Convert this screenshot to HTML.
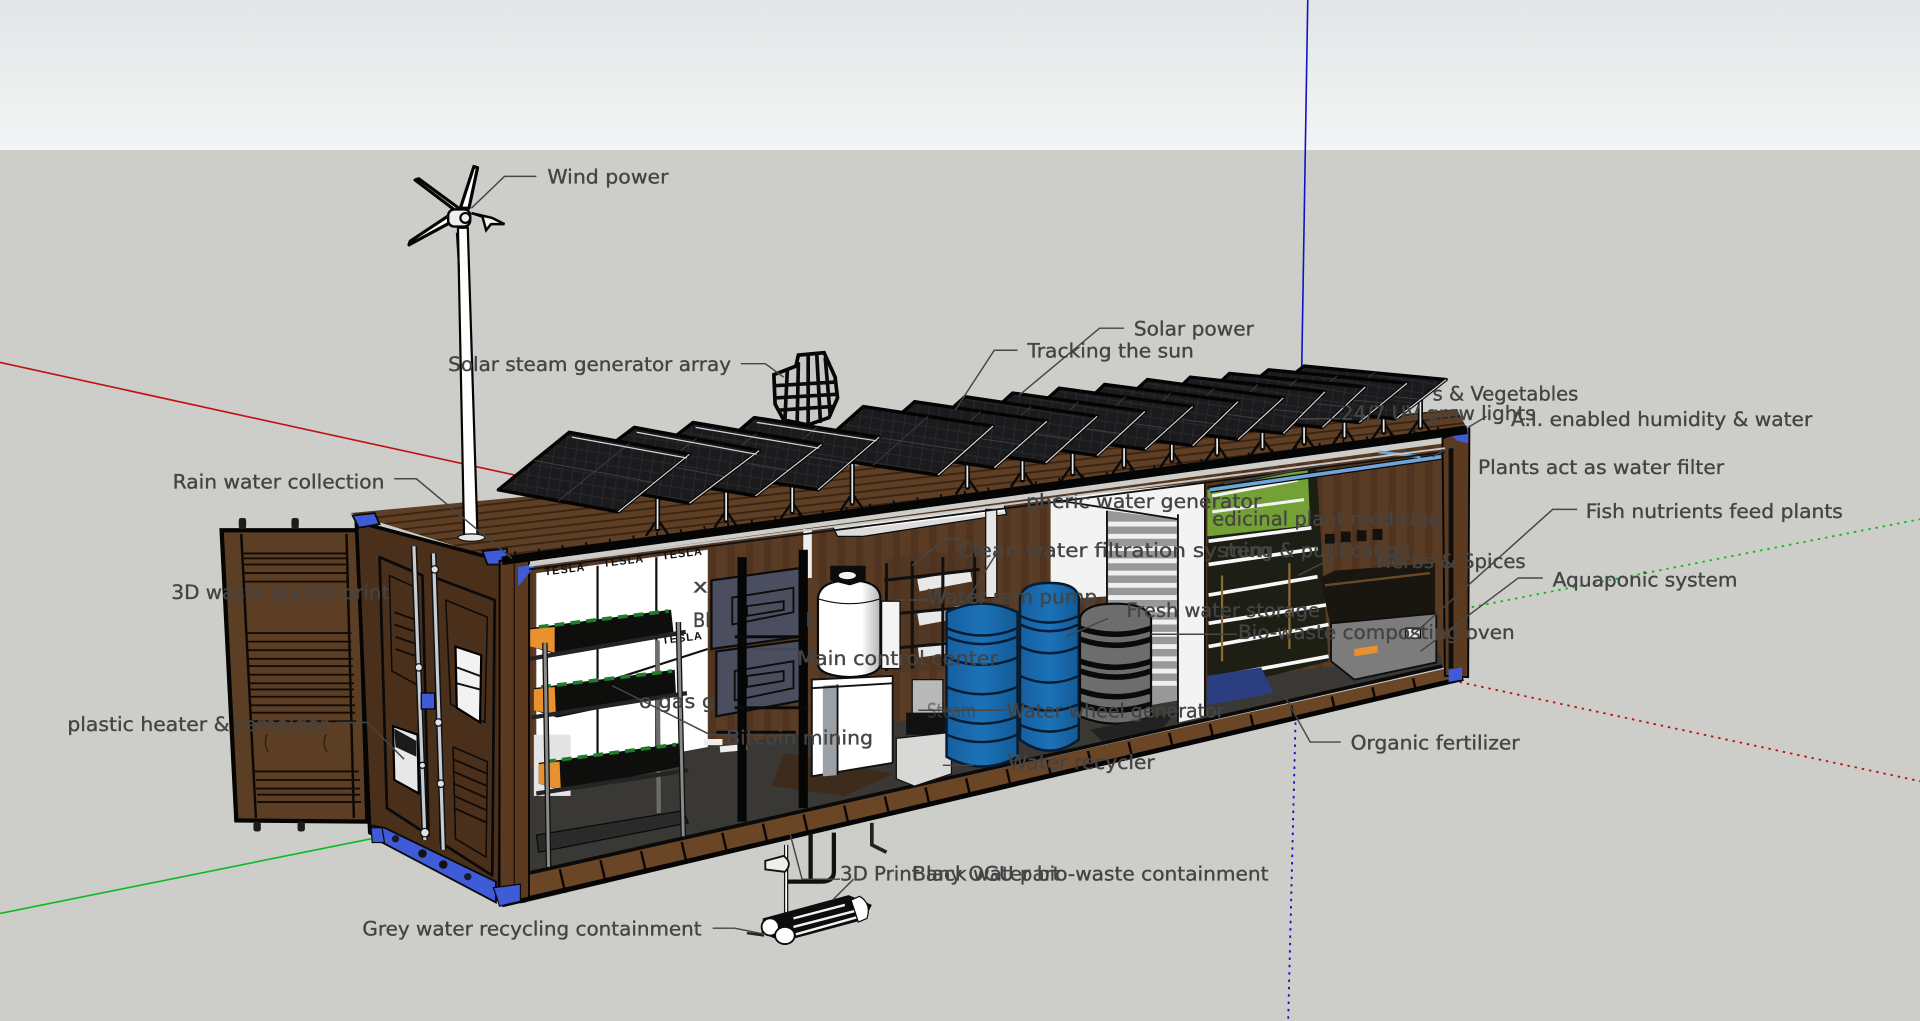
<!DOCTYPE html>
<html lang="en"><head><meta charset="utf-8"><title>Container farm model</title>
<style>
html,body{margin:0;padding:0;width:1920px;height:1021px;overflow:hidden;background:#cdcec9}
svg{display:block}
.l{font-family:"DejaVu Sans","Liberation Sans",sans-serif;font-size:16.2px;fill:#444;stroke:#444;stroke-width:.3}
.f{fill:none;stroke:#464646;stroke-width:1.2}
.p{fill:url(#cell);stroke:#040404;stroke-width:2.8;stroke-linejoin:round}
.g{fill:none;stroke:#3e3e42;stroke-width:.8}
.e{fill:none;stroke:#d4d4d4;stroke-width:1}
.k{fill:none;stroke:#0a0a0a;stroke-linecap:round;stroke-linejoin:round}
.t{font-family:"Liberation Sans",sans-serif;font-weight:700;font-size:9px;fill:#111;letter-spacing:.8px}
</style></head><body>
<svg width="1920" height="1021" viewBox="0 0 1568 833.8" xmlns="http://www.w3.org/2000/svg">
<defs>
<linearGradient id="sky" x1="0" y1="0" x2="0" y2="1"><stop offset="0" stop-color="#e2e6e6"/><stop offset="1" stop-color="#f3f4f5"/></linearGradient>
<pattern id="cell" width="9" height="9" patternUnits="userSpaceOnUse" patternTransform="rotate(9)"><rect width="9" height="9" fill="#1b1b1e"/><path d="M0 .5H9M.5 0V9" stroke="#2c2c30" stroke-width=".7"/></pattern>
<pattern id="roof" width="40" height="6" patternUnits="userSpaceOnUse" patternTransform="rotate(-6.5)"><rect width="40" height="6" fill="#5e3e25"/><rect y="4" width="40" height="1.4" fill="#38230f"/></pattern>
<pattern id="wall" width="15" height="40" patternUnits="userSpaceOnUse"><rect width="15" height="40" fill="#5a3c24"/><rect x="9" width="6" height="40" fill="#503420"/></pattern>
<linearGradient id="blue" x1="0" y1="0" x2="1" y2="0"><stop offset="0" stop-color="#155f9e"/><stop offset=".5" stop-color="#1c72b8"/><stop offset="1" stop-color="#125a95"/></linearGradient>
<linearGradient id="tank" x1="0" y1="0" x2="1" y2="0"><stop offset="0" stop-color="#fff"/><stop offset=".7" stop-color="#fff"/><stop offset="1" stop-color="#b5b5b5"/></linearGradient>
<clipPath id="band"><polygon points="425,717 1185,547 1195,553 425,738"/></clipPath>
</defs>

<rect width="1568" height="834" fill="#cdcec9"/>
<rect width="1568" height="122.5" fill="url(#sky)"/>

<!-- axes -->
<path d="M1068 0L1063 306" stroke="#1111c8" stroke-width="1.3" fill="none"/>
<path d="M0 296L425 389" stroke="#c01010" stroke-width="1.3" fill="none"/>
<path d="M0 746L303 685" stroke="#10b820" stroke-width="1.3" fill="none"/>
<path d="M1196 497L1568 424" stroke="#10b820" stroke-width="1.5" stroke-dasharray="2 4" fill="none"/>
<path d="M1192 557L1568 638" stroke="#c01010" stroke-width="1.5" stroke-dasharray="2 4" fill="none"/>
<path d="M1058 590L1052 834" stroke="#1111c8" stroke-width="1.5" stroke-dasharray="2 4" fill="none"/>

<!-- steam generator cage -->
<path d="M632 306L650 299L652 290L673 288L682 308L684 325L677 341L660 347L640 343L633 330Z" fill="#c8c8c6" stroke="#050505" stroke-width="3"/>
<path class="k" stroke-width="3" d="M633 315L682 312M633 325L683 322M636 335L679 332M643 302L641 343M652 297L651 346M660 290L660 347M667 289L670 344M674 293L678 339"/>

<!-- roof -->
<polygon points="286,419 1190,334 1198,350 410,458" fill="url(#roof)"/>

<!-- poles -->
<g class="k">
<path stroke-width="4.2" d="M537 432V395M593 425V390M647 418V385M696 411V375M790 398V365M835 392V360M876 387V355M918 381V350M957 376V345M994 371V340M1031 366V335M1065 362V335M1098 357V335M1130 353V330M1160 349V325"/>
<path stroke-width="2" d="M528 437L537 424L546 437M584 430L593 417L602 430M638 423L647 410L656 423M687 416L696 403L705 416M781 403L790 390L799 403M826 397L835 384L844 397M867 392L876 379L885 392M909 386L918 373L927 386M948 381L957 368L966 381M985 376L994 363L1003 376M1022 371L1031 358L1040 371M1056 367L1065 354L1074 367M1089 362L1098 349L1107 362M1121 358L1130 345L1139 358M1151 354L1160 341L1169 354"/>
</g>
<path stroke="#e8e8e8" stroke-width="1.4" fill="none" d="M537 432V395M593 425V390M647 418V385M696 411V375M790 398V365M835 392V360M876 387V355M918 381V350M957 376V345M994 371V340M1031 366V335M1065 362V335M1098 357V335M1130 353V330M1160 349V325"/>

<!-- solar panels -->
<path class="p" d="M1065 299L1181 310L1140 342L1024 331Z"/><path class="g" d="M1123 304L1082 336M1044 315L1160 326"/><path class="e" d="M1140 342L1181 310"/>
<path class="p" d="M1036 302L1149 313L1110 345L997 334Z"/><path class="g" d="M1092 307L1053 339M1016 318L1129 329"/><path class="e" d="M1110 345L1149 313"/>
<path class="p" d="M1004 305L1115 316L1080 349L969 338Z"/><path class="g" d="M1059 310L1024 343M986 321L1097 332"/><path class="e" d="M1080 349L1115 316"/>
<path class="p" d="M972 308L1082 320L1048 354L938 342Z"/><path class="g" d="M1027 314L993 348M955 325L1065 337"/><path class="e" d="M1048 354L1082 320"/>
<path class="p" d="M937 310L1048 325L1011 359L900 344Z"/><path class="g" d="M992 317L955 351M918 327L1029 342"/><path class="e" d="M1011 359L1048 325"/>
<path class="p" d="M902 314L1011 328L974 364L865 350Z"/><path class="g" d="M956 321L919 357M883 332L992 346"/><path class="e" d="M974 364L1011 328"/>
<path class="p" d="M865 317L974 332L935 367L826 352Z"/><path class="g" d="M919 324L880 360M845 334L954 350"/><path class="e" d="M935 367L974 332"/>
<path class="p" d="M827 321L935 336L896 372L788 357Z"/><path class="g" d="M881 328L842 364M807 339L915 354"/><path class="e" d="M896 372L935 336"/>
<path class="p" d="M788 324L896 340L854 378L746 362Z"/><path class="g" d="M842 332L800 370M767 343L875 359"/><path class="e" d="M854 378L896 340"/>
<path class="p" d="M747 328L855 344L812 382L704 366Z"/><path class="g" d="M801 336L758 374M725 347L833 363"/><path class="e" d="M812 382L855 344"/>
<path class="p" d="M705 332L811 348L766 388L660 372Z"/><path class="g" d="M758 340L713 380M682 352L788 368"/><path class="e" d="M766 388L811 348"/>
<path class="p" d="M616 341L718 357L668 400L566 384Z"/><path class="g" d="M667 349L617 392M591 362L693 378"/><path class="e" d="M668 400L718 357M618 345L716 360"/>
<path class="p" d="M566 345L671 363L617 405L512 387Z"/><path class="g" d="M618 354L564 396M539 366L644 384"/><path class="e" d="M617 405L671 363M568 349L669 366"/>
<path class="p" d="M518 349L620 368L563 411L461 392Z"/><path class="g" d="M569 358L512 401M489 370L591 389"/><path class="e" d="M563 411L620 368M520 353L618 371"/>
<path class="p" d="M465 353L563 371L505 418L407 400Z"/><path class="g" d="M514 362L456 409M436 376L534 394"/><path class="e" d="M505 418L563 371M467 357L561 374"/>

<!-- open door -->
<polygon points="181,433 293,433 300,671 193,670" fill="#5c3e25" stroke="#050505" stroke-width="3.5"/>
<path stroke="#0e0804" stroke-width="2" fill="none" d="M197 436L209 668M283 436L289 668"/>
<path d="M197 452L283 452M198 456L283 456M198 461L284 461M198 468L284 468M199 475L284 475M201 517L287 517M201 524L287 524M202 531L287 531M202 538L288 538M203 544L288 544M203 551L289 551M204 558L289 558M204 563L289 563M204 569L289 569M205 576L290 576M205 582L290 582M206 589L291 589M208 630L293 630M209 637L294 637M209 644L294 644M210 649L294 649M210 655L295 655" stroke="#120a05" stroke-width="1.5" fill="none"/>
<path d="M218 576q-3 8 1 14M266 576q-3 8 1 14" stroke="#2a1a0c" stroke-width="1" fill="none" transform="translate(0 24)"/>
<g fill="#1c1c1c"><rect x="195" y="423" width="6" height="9" rx="2"/><rect x="238" y="423" width="6" height="9" rx="2"/><rect x="207" y="671" width="6" height="8" rx="2"/><rect x="243" y="671" width="6" height="8" rx="2"/></g>

<!-- door-side face -->
<polygon points="291,426 410,458 408,735 302,680" fill="#4a2f1b" stroke="#050505" stroke-width="3"/>
<polygon points="302,674 314,676 405,720 405,737 312,688" fill="#3f5bd8" stroke="#0a0a0a" stroke-width="1.5"/>
<circle cx="323" cy="685" r="3" fill="#1a1a2a"/><circle cx="345" cy="697" r="3.5" fill="#111"/><circle cx="362" cy="706" r="3.5" fill="#111"/><circle cx="382" cy="716" r="3" fill="#1a1a2a"/>
<path class="k" stroke-width="2.2" d="M310 455L345 470L350 682L316 660ZM356 472L404 490L402 715L360 688Z"/>
<path class="k" stroke-width="1.2" d="M318 470L340 480L342 560L320 548ZM364 490L398 504L396 590L368 575ZM370 610L398 622L397 700L372 685Z"/>
<path d="M322 500L342 507M322 510L343 517M323 520L343 527M323 530L343 537M370 620L398 632M370 630L398 642M371 640L398 652M371 650L398 662M371 660L398 672" stroke="#120a05" stroke-width="1.5" fill="none"/>
<polygon points="321,593 341,600 342,648 322,637" fill="#e8e8e8" stroke="#000" stroke-width="1.8"/>
<path d="M322 595L340 605V618L323 610Z" fill="#1a1a1a"/>
<polygon points="372,528 393,535 392,590 373,578" fill="#f2f2f2" stroke="#000" stroke-width="1.8"/>
<path d="M373 545L392 552M373 558L392 563" stroke="#111" stroke-width="1.6"/>
<path d="M338 446L347 686M354 452L362 694" stroke="#111" stroke-width="5" fill="none"/>
<path d="M338 446L347 686M354 452L362 694" stroke="#c6ccd4" stroke-width="2.6" fill="none"/>
<g fill="#dfe3e8" stroke="#111"><circle cx="355" cy="465" r="3"/><circle cx="342" cy="545" r="3"/><circle cx="358" cy="590" r="3"/><circle cx="345" cy="625" r="2.5"/><circle cx="360" cy="640" r="3"/><circle cx="347" cy="680" r="3.5"/></g>
<rect x="344" y="566" width="11" height="13" fill="#3f5bd8" stroke="#000"/>
<polygon points="288,421 306,419 310,428 293,431" fill="#3f5bd8" stroke="#0a0a0a" stroke-width="1.5"/>
<polygon points="394,450 414,448 414,461 398,461" fill="#3f5bd8" stroke="#0a0a0a" stroke-width="1.5"/>
<polygon points="303,676 312,676 314,688 304,688" fill="#3f5bd8" stroke="#0a0a0a"/>

<!-- interior wall + floor -->
<polygon points="430,462 1180,362 1180,545 430,712" fill="url(#wall)"/>
<polygon points="432,628 1176,533 1178,543 432,712" fill="#3a3835"/>
<!-- floor band -->
<polygon points="425,715 1185,545 1195,553 425,738" fill="#6a4526"/>
<path d="M425 726L1190 549" stroke="#0e0804" stroke-width="24" stroke-dasharray="2 32" fill="none" clip-path="url(#band)"/>
<path d="M432 713L1178 544" stroke="#0a0a0a" stroke-width="3"/>
<path d="M410 739L1195 554" stroke="#050505" stroke-width="4"/>

<!-- front post, roof rail -->
<polygon points="408,458 432,455 432,733 408,738" fill="#5b3a20" stroke="#050505" stroke-width="1.5"/>
<path d="M420 460V733" stroke="#1a0f08" stroke-width="1"/>
<polygon points="423,463 438,461 423,479" fill="#3f5bd8"/>
<polygon points="403,725 425,722 425,736 408,740" fill="#3f5bd8" stroke="#0a0a0a"/>
<polygon points="1178,358 1200,350 1199,553 1180,552" fill="#5b3a20" stroke="#050505" stroke-width="1.5"/>
<rect x="1183" y="366" width="4" height="180" fill="#0e0e0e"/>
<polygon points="1183,547 1194,545 1194,555 1183,557" fill="#3f5bd8"/>
<polygon points="1180,350 1199,349 1199,362 1190,360" fill="#3f5bd8"/>

<!-- Tesla wall -->
<polygon points="438,468 578,449 578,610 438,636" fill="#fff"/>
<path d="M488 462V628M536 455V617M438 575L578 530" stroke="#111" stroke-width="1.8"/>
<text class="t" transform="translate(445 470) rotate(-7)">TESLA</text>
<text class="t" transform="translate(493 463) rotate(-7)">TESLA</text>
<text class="t" transform="translate(541 457) rotate(-7)">TESLA</text>
<text class="t" transform="translate(541 526) rotate(-7)">TESLA</text>
<rect x="436" y="600" width="30" height="50" fill="#e4e4e4"/>

<!-- shelves -->
<g>
<path d="M537 523L538 664" stroke="#6c6c6c" stroke-width="3.5"/>
<polygon points="433,513 548,498 550,516 453,534 433,528" fill="#0e0f0d"/>
<path d="M440 512L546 499" stroke="#1e7d2a" stroke-width="3" stroke-dasharray="8 5"/>
<polygon points="433,514 453,512 453,533 433,528" fill="#e8912e"/>
<path d="M433 538L560 516" stroke="#242424" stroke-width="3.5"/>
<polygon points="436,562 551,547 552,566 455,586 436,580" fill="#0e0f0d"/>
<path d="M442 561L549 548" stroke="#1e7d2a" stroke-width="3" stroke-dasharray="8 5"/>
<polygon points="436,563 453,561 454,584 436,580" fill="#e8912e"/>
<path d="M434 586L561 566" stroke="#242424" stroke-width="3.5"/>
<polygon points="440,623 554,607 556,626 460,646 440,640" fill="#0e0f0d"/>
<path d="M446 622L552 608" stroke="#1e7d2a" stroke-width="3" stroke-dasharray="8 5"/>
<polygon points="440,624 457,622 458,645 440,640" fill="#e8912e"/>
<path d="M438 648L562 629" stroke="#242424" stroke-width="3.5"/>
<polygon points="438,682 558,662 562,672 440,696" fill="#2a2a2a" stroke="#0a0a0a"/>
<path d="M445 525L448 708M554 508L558 683" stroke="#111" stroke-width="4.5"/>
<path d="M445 525L448 708M554 508L558 683" stroke="#8a8a8a" stroke-width="2.4"/>
</g>

<!-- lamp and pipes -->
<polygon points="680,430 820,412 822,420 705,438 684,438" fill="#dcdcdc" stroke="#0a0a0a"/>
<path d="M705 430L820 416" stroke="#fff" stroke-width="3"/>
<rect x="805" y="416" width="9" height="72" fill="#e6e6e6" stroke="#111"/>
<rect x="656" y="432" width="7" height="40" fill="#eee"/>

<!-- white column + louver -->
<polygon points="858,407 962,396 984,394 984,585 962,590 962,572 904,580 904,487 858,490" fill="#f3f3f3"/>
<polygon points="904,417 962,424 962,572 904,582" fill="#989898"/>
<path d="M905 428H961M905 438H961M905 448H961M905 458H961M905 468H961M905 478H961M905 488H961M905 498H961M905 508H961M905 518H961M905 528H961M905 538H961M905 548H961M905 558H961" stroke="#f0f0f0" stroke-width="4"/>
<path d="M904 417V582M962 420V590M984 395V585M860 408L962 424" stroke="#111" stroke-width="1.5" fill="none"/>

<!-- RO rack -->
<path d="M722 456L800 448V545L722 550Z" fill="#4d3520" opacity=".55"/>
<path d="M750 478L793 470M750 506L793 498M750 532L793 526" stroke="#e8e8e8" stroke-width="10" fill="none"/>
<path d="M724 460V548M745 458V546M770 455V544M796 452V540M722 474L800 465M722 502L800 495M722 530L800 523" stroke="#111" stroke-width="2.5" fill="none"/>
<path d="M745 555H770V583H745Z" fill="#b9b9b9" stroke="#111"/>
<path d="M740 582H773V600H740Z" fill="#111"/>

<!-- dark boxes -->
<polygon points="581,474 653,464 653,520 581,530" fill="#4a4e5e" stroke="#0c0c0c" stroke-width="1.8"/>
<polygon points="585,532 653,523 655,572 585,585" fill="#4a4e5e" stroke="#0c0c0c" stroke-width="1.8"/>
<path d="M598 488L648 480V500L598 510ZM610 495L640 491V498L610 503Z" fill="none" stroke="#0c0c0c" stroke-width="1.5"/>
<path d="M600 548L648 540V562L600 572ZM610 552L640 548V556L610 561Z" fill="none" stroke="#0c0c0c" stroke-width="1.5"/>

<!-- cabinet -->
<polygon points="640,615 730,632 690,650 630,642" fill="#3d2b1c"/>
<polygon points="663,555 729,552 729,623 663,634" fill="#fff" stroke="#111" stroke-width="1.5"/>
<polygon points="672,560 684,559 684,633 672,634" fill="#9aa0a3"/>
<path d="M684 559V633M663 562L729 558" stroke="#111" stroke-width="1.5" fill="none"/>
<polygon points="732,603 777,598 777,632 747,642 732,636" fill="#d8d8d6" stroke="#111"/>
<path d="M588 612L610 610M575 606H590" stroke="#eee" stroke-width="5"/>

<!-- white tanks -->
<rect x="720" y="491" width="15" height="55" fill="#f4f4f4" stroke="#111"/>
<path d="M668 488Q670 474 694 474Q718 474 719 488V543Q717 552 694 553Q670 552 668 543Z" fill="url(#tank)" stroke="#0a0a0a" stroke-width="1.8"/>
<path d="M668 489Q694 497 719 489" stroke="#111" fill="none"/>
<path d="M678 462H707V474L694 478L678 474Z" fill="#0c0c0c"/>
<ellipse cx="692" cy="470" rx="7" ry="3" fill="#f4f4f4"/>

<!-- black posts -->
<path d="M606 455V671M656 449V660" stroke="#060606" stroke-width="7.5" fill="none"/>
<path d="M600 520H655M600 578H660M585 598H650" stroke="#0a0a0a" stroke-width="2.5" fill="none"/>

<!-- blue tanks -->
<path d="M773 500Q802 486 831 500V618Q802 634 773 618Z" fill="url(#blue)" stroke="#071c32" stroke-width="2"/>
<path d="M833 488Q835 476 857 476Q879 476 881 488V604Q857 622 833 604Z" fill="url(#blue)" stroke="#071c32" stroke-width="2"/>
<path d="M773 513Q802 525 831 513M773 520Q802 532 831 520M773 537Q802 549 831 537M773 561Q802 573 831 561M773 585Q802 597 831 585M773 600Q802 612 831 600" stroke="#071c32" stroke-width="2" fill="none"/>
<path d="M833 503Q857 514 881 503M833 510Q857 521 881 510M833 528Q857 539 881 528M833 552Q857 563 881 552M833 575Q857 586 881 575M833 592Q857 603 881 592" stroke="#071c32" stroke-width="2" fill="none"/>

<!-- dark tank -->
<path d="M882 505Q885 493 911 493Q937 493 940 505V585Q911 597 882 585Z" fill="#6d6d6d" stroke="#0a0a0a" stroke-width="1.8"/>
<path d="M882 513Q911 523 940 513M882 522Q911 532 940 522M882 540Q911 550 940 540M882 548Q911 558 940 548M882 564Q911 574 940 564M882 575Q911 585 940 575" stroke="#0a0a0a" stroke-width="4.5" fill="none"/>
<path d="M890 596L960 582L950 594L900 605Z" fill="#222"/>

<!-- farm rack right -->
<polygon points="986,397 1075,380 1085,540 986,565" fill="#1d1f14"/>
<polygon points="986,400 1068,383 1070,429 986,438" fill="#74a136"/>
<path d="M990 405L1060 392M990 418L1065 408" stroke="#f2f2f2" stroke-width="2.5" fill="none"/>
<path d="M987 442L1071 431M987 461L1076 448M987 486L1076 471M987 509L1083 494M987 528L1085 510M987 554L1085 536" stroke="#f7f7f7" stroke-width="3" fill="none"/>
<polygon points="986,552 1030,545 1040,566 986,576" fill="#2b3f80"/>
<path d="M998 470V540M1053 460V530" stroke="#8f6a36" stroke-width="1.8"/>
<path d="M1082 436h8v8h-8zM1095 434h8v9h-8zM1108 433h8v9h-8zM1121 432h8v9h-8z" fill="#14110c"/>
<polygon points="1078,472 1090,466 1172,460 1172,505 1087,512" fill="#19150f"/>
<path d="M1082 478L1168 468" stroke="#6a4a25" stroke-width="2"/>
<polygon points="1087,509 1173,501 1173,541 1106,555 1087,540" fill="#7c7c7c" stroke="#0e0e0e" stroke-width="1.5"/>
<polygon points="1106,530 1125,527 1125,533 1106,536" fill="#e8912e"/>
<path d="M988 400L1177 373" stroke="#0a0a0a" stroke-width="5"/>
<path d="M988 400L1177 373" stroke="#6ea6da" stroke-width="3"/>
<path d="M1126 369L1160 373" stroke="#6ea6da" stroke-width="2.5"/>
<rect x="1148" y="513" width="12" height="8" fill="#eee" stroke="#000"/>

<!-- roof edge -->
<path d="M410 458L1198 351" stroke="#050505" stroke-width="7"/>
<path d="M420 452L1190 348" stroke="#0a0a0a" stroke-width="3" stroke-dasharray="1.5 18"/>
<path d="M432 462L1180 366" stroke="#c8c8c8" stroke-width="1.6"/>
<path d="M432 465L1180 369" stroke="#111" stroke-width="1.5"/>

<!-- turbine -->
<polygon points="374,186 382,186 390,438 379,438" fill="#fff" stroke="#050505" stroke-width="1.8"/>
<path d="M373 190L375 222" stroke="#050505" stroke-width="1.5"/>
<ellipse cx="385" cy="439" rx="11" ry="3" fill="#e5e5e5" stroke="#111"/>
<path d="M372 172L339 147L342 146L376 171ZM376 170L387 136L390 137L383 170ZM371 180L334 200L335 197L368 175Z" fill="#fff" stroke="#050505" stroke-width="2.6" stroke-linejoin="round"/>
<rect x="366" y="171" width="18" height="14" rx="5" fill="#eee" stroke="#050505" stroke-width="2"/>
<circle cx="380" cy="178" r="4" fill="none" stroke="#050505" stroke-width="1.8"/>
<path d="M385 174L402 178L412 183L401 183L397 188L394 177Z" fill="#f2f2f2" stroke="#050505" stroke-width="2"/>

<!-- underside plumbing -->
<path d="M712 672V690L724 696" stroke="#222" stroke-width="3" fill="none"/>
<path d="M642 690V752M662 680V720M681 680V712Q681 720 670 720H642" stroke="#111" stroke-width="3.5" fill="none"/>
<path d="M642 690V752" stroke="#fff" stroke-width="1.5"/>
<path d="M625 703L640 699Q648 705 641 712L625 710Z" fill="#eee" stroke="#111" stroke-width="1.5"/>
<polygon points="623,750 693,731 712,739 706,751 639,769 622,762" fill="#0d0d0d"/>
<path d="M648 750L690 739M648 757L698 744M650 763L700 749" stroke="#f2f2f2" stroke-width="2"/>
<path d="M695 735L702 732Q712 738 708 750L701 753Z" fill="#fff" stroke="#0d0d0d"/>
<ellipse cx="629" cy="757" rx="7" ry="7" fill="#fff" stroke="#0d0d0d" stroke-width="1.5"/>
<ellipse cx="641" cy="764" rx="8" ry="7" fill="#fff" stroke="#0d0d0d" stroke-width="1.5"/>
<path d="M610 762L624 764" stroke="#222" stroke-width="2"/>

<!-- leaders -->
<path class="f" d="M438 144H412L385 170M605 297H625L640 308M918 268H898L832 323M831 286H812L780 335M322 391H340L418 456M1095 342H1060M1214 340L1199 349M1170 373L1190 362M1288 416H1268L1150 522M1260 472H1240L1160 532M1095 606H1070L1050 570M582 758H600L625 763M686 718H655L645 680M697 718L680 735M275 590H300L330 620M784 440H772L745 462M815 450L790 490M758 490H730M500 560L580 600H600M770 625H795M750 580H820M940 518H1010M1090 455L1060 470M905 505L870 520M615 530H650M1000 395L1080 380"/>

<!-- labels -->
<g class="l">
<text x="447" y="150" textLength="99" lengthAdjust="spacingAndGlyphs">Wind power</text>
<text x="366" y="303" textLength="231" lengthAdjust="spacingAndGlyphs">Solar steam generator array</text>
<text x="926" y="274" textLength="98" lengthAdjust="spacingAndGlyphs">Solar power</text>
<text x="839" y="292" textLength="136" lengthAdjust="spacingAndGlyphs">Tracking the sun</text>
<text x="141" y="399" textLength="173" lengthAdjust="spacingAndGlyphs">Rain water collection</text>
<text x="1170" y="327" textLength="119" lengthAdjust="spacingAndGlyphs">s &amp; Vegetables</text>
<text x="1095" y="343" textLength="159" lengthAdjust="spacingAndGlyphs">24/7 UV grow lights</text>
<text x="1234" y="348" textLength="246" lengthAdjust="spacingAndGlyphs">A.I. enabled humidity &amp; water</text>
<text x="1207" y="387" textLength="201" lengthAdjust="spacingAndGlyphs">Plants act as water filter</text>
<text x="1295" y="423" textLength="210" lengthAdjust="spacingAndGlyphs">Fish nutrients feed plants</text>
<text x="1124" y="464" textLength="122" lengthAdjust="spacingAndGlyphs">Herbs &amp; Spices</text>
<text x="1268" y="479" textLength="151" lengthAdjust="spacingAndGlyphs">Aquaponic system</text>
<text x="1011" y="522" textLength="226" lengthAdjust="spacingAndGlyphs">Bio-waste composting oven</text>
<text x="1103" y="612" textLength="138" lengthAdjust="spacingAndGlyphs">Organic fertilizer</text>
<text x="838" y="415" textLength="192" lengthAdjust="spacingAndGlyphs">pheric water generator</text>
<text x="990" y="429" textLength="186" lengthAdjust="spacingAndGlyphs">edicinal plant medicine</text>
<text x="782" y="455" textLength="256" lengthAdjust="spacingAndGlyphs">Clean water filtration system</text>
<text x="1000" y="455" textLength="152" lengthAdjust="spacingAndGlyphs">ming &amp; purification</text>
<text x="757" y="493" textLength="139" lengthAdjust="spacingAndGlyphs">Water ram pump</text>
<text x="920" y="504" textLength="158" lengthAdjust="spacingAndGlyphs">Fresh water storage</text>
<text x="651" y="543" textLength="164" lengthAdjust="spacingAndGlyphs">Main control center</text>
<text x="757" y="586" textLength="40" lengthAdjust="spacingAndGlyphs" opacity=".6">Steam</text>
<text x="822" y="586" textLength="178" lengthAdjust="spacingAndGlyphs">Water wheel generator</text>
<text x="823" y="628" textLength="120" lengthAdjust="spacingAndGlyphs">Water recycler</text>
<text x="593" y="608" textLength="120" lengthAdjust="spacingAndGlyphs">Bitcoin mining</text>
<text x="522" y="578" textLength="62" lengthAdjust="spacingAndGlyphs">o gas g</text>
<text x="566" y="484" textLength="12" lengthAdjust="spacingAndGlyphs">x</text>
<text x="566" y="512" textLength="14" lengthAdjust="spacingAndGlyphs">Bl</text>
<text x="658" y="512" textLength="8" lengthAdjust="spacingAndGlyphs">k</text>
<text x="140" y="489" textLength="178" lengthAdjust="spacingAndGlyphs">3D waste plastic print</text>
<text x="55" y="597" textLength="213" lengthAdjust="spacingAndGlyphs">plastic heater &amp; remolder</text>
<text x="296" y="764" textLength="277" lengthAdjust="spacingAndGlyphs">Grey water recycling containment</text>
<text x="686" y="719" textLength="180" lengthAdjust="spacingAndGlyphs">3D Print any OGU part</text>
<text x="745" y="719" textLength="291" lengthAdjust="spacingAndGlyphs">Black water bio-waste containment</text>
</g>
</svg>
</body></html>
